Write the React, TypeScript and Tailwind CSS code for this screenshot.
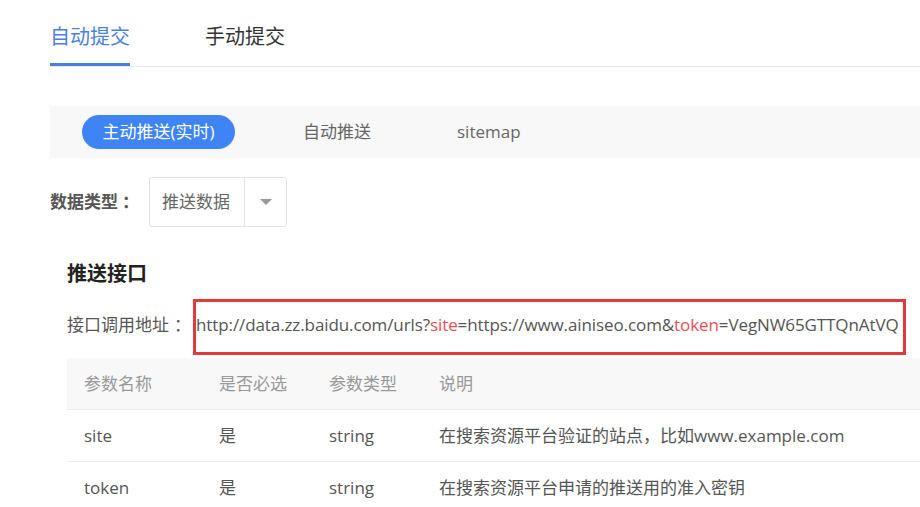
import React from 'react';

const params = [
  { name: 'site', required: '是', type: 'string', desc: '在搜索资源平台验证的站点，比如www.example.com' },
  { name: 'token', required: '是', type: 'string', desc: '在搜索资源平台申请的推送用的准入密钥' },
];

const App: React.FC = () => {
  return (
    <div className="w-[920px] h-[507px] overflow-hidden bg-white pl-[50px] font-['Open_Sans','Noto_Sans_CJK_SC',sans-serif] text-[17px] text-[#555]">
      {/* Top tabs */}
      <div className="flex h-[67px] border-b border-[#e8e8e8]">
        <div className="h-[66px] w-[80px] pt-[24px] leading-[26px] text-[20px] text-[#4a7fe0] border-b-[3px] border-[#4a7fe0] whitespace-nowrap">
          自动提交
        </div>
        <div className="ml-[75px] pt-[24px] leading-[26px] text-[20px] text-[#333] whitespace-nowrap">手动提交</div>
      </div>

      {/* Sub tabs */}
      <div className="mt-[39px] h-[52px] bg-[#f8f8f8] flex items-center pl-[32px]">
        <div className="w-[153px] h-[34px] rounded-full bg-[#3f84f5] text-white flex items-center justify-center whitespace-nowrap">
          主动推送(实时)
        </div>
        <div className="ml-[68px] text-[#666] whitespace-nowrap">自动推送</div>
        <div className="ml-[86px] text-[#666]">sitemap</div>
      </div>

      {/* Data type */}
      <div className="mt-[19px] flex items-center">
        <div className="w-[99px] font-bold text-[#555] whitespace-nowrap">
          数据类型<span className="ml-[4px]">：</span>
        </div>
        <div className="w-[138px] h-[50px] border border-[#e3e3e3] rounded-[3px] flex">
          <div className="w-[95px] border-r border-[#e3e3e3] flex items-center pl-[12px] text-[#666] whitespace-nowrap">推送数据</div>
          <div className="flex-1 flex items-center justify-center">
            <div className="w-0 h-0 border-l-[6px] border-r-[6px] border-t-[6px] border-l-transparent border-r-transparent border-t-[#999]" />
          </div>
        </div>
      </div>

      {/* Push API */}
      <div className="pl-[17px]">
        <div className="mt-[34px] leading-[26px] text-[20px] font-bold text-[#222]">推送接口</div>
        <div className="mt-[12px] flex items-start">
          <div className="mt-[13px] w-[126px] leading-[26px] whitespace-nowrap">
            接口调用地址<span className="ml-[5px]">：</span>
          </div>
          <div className="h-[56px] border-[3px] border-[#e03a3e] pt-[10px] pr-[4px] leading-[26px] tracking-[-0.1px] whitespace-nowrap">
            http://data.zz.baidu.com/urls?<span className="text-[#ee4d55]">site</span>=https://www.ainiseo.com&amp;<span className="text-[#ee4d55]">token</span>=VegNW65GTTQnAtVQ
          </div>
        </div>

        {/* Params table */}
        <div className="mt-[3px]">
          <div className="grid grid-cols-[135px_110px_110px_1fr] h-[52px] bg-[#f8f8f8] border-b border-[#ececec] items-center text-[#999]">
            <div className="pl-[17px]">参数名称</div>
            <div className="pl-[17px]">是否必选</div>
            <div className="pl-[17px]">参数类型</div>
            <div className="pl-[17px]">说明</div>
          </div>
          {params.map((p) => (
            <div key={p.name} className="grid grid-cols-[135px_110px_110px_1fr] h-[52px] border-b border-[#ececec] items-center">
              <div className="pl-[17px]">{p.name}</div>
              <div className="pl-[17px]">{p.required}</div>
              <div className="pl-[17px]">{p.type}</div>
              <div className="pl-[17px] whitespace-nowrap">{p.desc}</div>
            </div>
          ))}
        </div>
      </div>
    </div>
  );
};

export default App;
